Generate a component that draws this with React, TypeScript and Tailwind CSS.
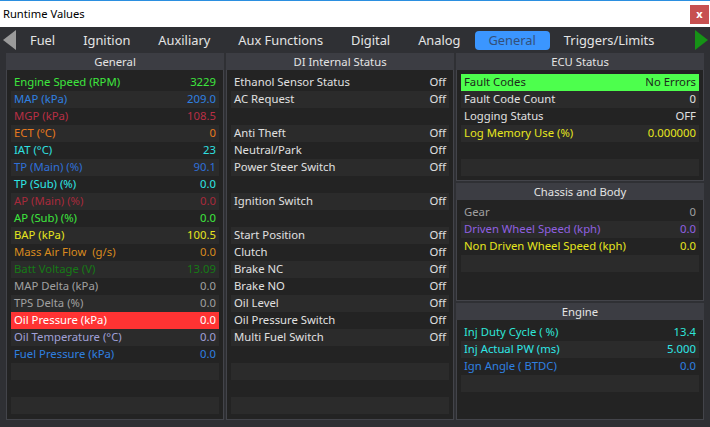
type Row = { label?: string; value?: string; color?: string; bg?: string };

const general: Row[] = [
  { label: "Engine Speed (RPM)", value: "3229", color: "text-[#3ee63e]" },
  { label: "MAP (kPa)", value: "209.0", color: "text-[#2f80e0]" },
  { label: "MGP (kPa)", value: "108.5", color: "text-[#b82f45]" },
  { label: "ECT (°C)", value: "0", color: "text-[#e87a1e]" },
  { label: "IAT (°C)", value: "23", color: "text-[#2fe0e0]" },
  { label: "TP (Main) (%)", value: "90.1", color: "text-[#2f70d8]" },
  { label: "TP (Sub) (%)", value: "0.0", color: "text-[#2ee6e6]" },
  { label: "AP (Main) (%)", value: "0.0", color: "text-[#a82a3c]" },
  { label: "AP (Sub) (%)", value: "0.0", color: "text-[#3ee63e]" },
  { label: "BAP (kPa)", value: "100.5", color: "text-[#e6e61e]" },
  { label: "Mass Air Flow  (g/s)", value: "0.0", color: "text-[#d98a1e]" },
  { label: "Batt Voltage (V)", value: "13.09", color: "text-[#167a16]" },
  { label: "MAP Delta (kPa)", value: "0.0", color: "text-[#a0a0a0]" },
  { label: "TPS Delta (%)", value: "0.0", color: "text-[#a0a0a0]" },
  { label: "Oil Pressure (kPa)", value: "0.0", color: "text-white", bg: "bg-[#ff3333]" },
  { label: "Oil Temperature (°C)", value: "0.0", color: "text-[#a0a0d8]" },
  { label: "Fuel Pressure (kPa)", value: "0.0", color: "text-[#2f80e0]" },
  {},
  {},
  {},
];

const di: Row[] = [
  { label: "Ethanol Sensor Status", value: "Off" },
  { label: "AC Request", value: "Off" },
  {},
  { label: "Anti Theft", value: "Off" },
  { label: "Neutral/Park", value: "Off" },
  { label: "Power Steer Switch", value: "Off" },
  {},
  { label: "Ignition Switch", value: "Off" },
  {},
  { label: "Start Position", value: "Off" },
  { label: "Clutch", value: "Off" },
  { label: "Brake NC", value: "Off" },
  { label: "Brake NO", value: "Off" },
  { label: "Oil Level", value: "Off" },
  { label: "Oil Pressure Switch", value: "Off" },
  { label: "Multi Fuel Switch", value: "Off" },
  {},
  {},
  {},
  {},
];

const ecu: Row[] = [
  { label: "Fault Codes", value: "No Errors", color: "text-[#1c2a1c]", bg: "bg-[#4dff4d]" },
  { label: "Fault Code Count", value: "0" },
  { label: "Logging Status", value: "OFF" },
  { label: "Log Memory Use (%)", value: "0.000000", color: "text-[#e6e61e]" },
  {},
  {},
];

const chassis: Row[] = [
  { label: "Gear", value: "0", color: "text-[#a0a0a0]" },
  { label: "Driven Wheel Speed (kph)", value: "0.0", color: "text-[#9060e0]" },
  { label: "Non Driven Wheel Speed (kph)", value: "0.0", color: "text-[#e6e61e]" },
  {},
];

const engine: Row[] = [
  { label: "Inj Duty Cycle ( %)", value: "13.4", color: "text-[#2ee6d8]" },
  { label: "Inj Actual PW (ms)", value: "5.000", color: "text-[#2ee6e6]" },
  { label: "Ign Angle ( BTDC)", value: "0.0", color: "text-[#2f80e0]" },
  {},
];

const tabs = ["Fuel", "Ignition", "Auxiliary", "Aux Functions", "Digital", "Analog", "General", "Triggers/Limits"];

const Panel = ({ title, rows, className }: { title: string; rows: Row[]; className: string }) => (
  <div className={`flex flex-col border-x border-b border-[#43444a] bg-[#232323] ${className}`}>
    <div className="-mx-px h-[17px] shrink-0 bg-[#3c3d43] text-center leading-[17px] text-[#e4e4e4]">{title}</div>
    <div className="flex flex-col px-1 pt-1">
      {rows.map((row, i) => (
        <div
          key={i}
          className={`flex h-[17px] items-center justify-between px-[3px] pb-[2px] leading-[15px] whitespace-pre ${
            row.bg ?? (i % 2 === 1 ? "bg-[#2b2b2b]" : "")
          } ${row.color ?? "text-[#e0e0e0]"}`}
        >
          <span>{row.label}</span>
          <span>{row.value}</span>
        </div>
      ))}
    </div>
  </div>
);

export default function App() {
  return (
    <div className="flex h-[427px] w-[710px] flex-col overflow-hidden bg-[#2f3034] font-['Noto_Sans',sans-serif] text-[11.3px]">
      <div className="flex h-[27px] shrink-0 items-center justify-between border-t border-[#2b8fe0] bg-white pr-px pl-[3px] text-[11.2px] text-black">
        <span>Runtime Values</span>
        <div className="flex h-[19px] w-[19px] items-center justify-center bg-[#c75050] text-[11px] font-bold text-white">x</div>
      </div>

      <div className="flex h-[26px] shrink-0 items-center text-[12.85px] whitespace-nowrap text-[#e4e4e4]">
        <svg width="13" height="20" viewBox="0 0 13 20" className="ml-[3px] shrink-0">
          <polygon points="13,0 13,20 0,10" fill="#9a9a9a" />
        </svg>
        <div className="flex flex-1 items-center">
          {tabs.map((tab) => (
            <div
              key={tab}
              className={`rounded-[4px] px-[14px] leading-[19px] ${tab === "General" ? "bg-[#3b96ff] text-[#33507a]" : ""}`}
            >
              {tab}
            </div>
          ))}
        </div>
        <svg width="13" height="20" viewBox="0 0 13 20" className="mr-[2px] shrink-0">
          <polygon points="0,0 0,20 13,10" fill="#169216" />
        </svg>
      </div>

      <div className="flex h-[367px] gap-[2px] pl-[6px]">
        <Panel title="General" rows={general} className="w-[218px]" />
        <Panel title="DI Internal Status" rows={di} className="w-[228px]" />
        <div className="flex w-[248px] flex-col gap-[2px]">
          <Panel title="ECU Status" rows={ecu} className="h-[128px]" />
          <Panel title="Chassis and Body" rows={chassis} className="h-[118px]" />
          <Panel title="Engine" rows={engine} className="flex-1" />
        </div>
      </div>
    </div>
  );
}
